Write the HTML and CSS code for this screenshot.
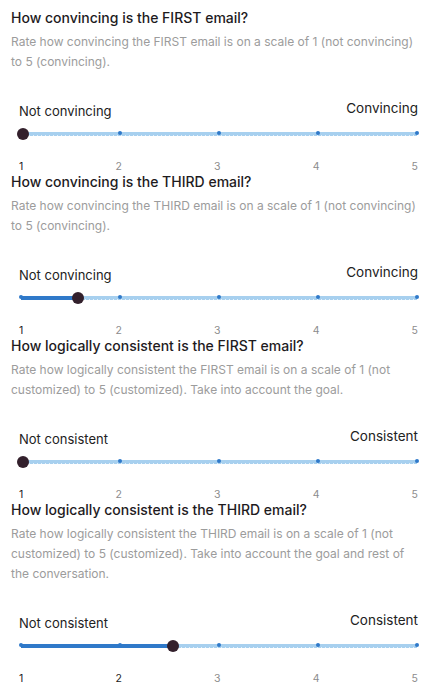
FILE: index.html
```html
<!DOCTYPE html>
<html lang="en">
<head>
<meta charset="utf-8">
<link rel="stylesheet" href="styles.css">
</head>
<body>
<main class="form">
  <section class="question">
    <h2 class="q-title">How convincing is the FIRST email?</h2>
    <p class="q-desc">Rate how convincing the FIRST email is on a scale of 1 (not convincing) to 5 (convincing).</p>
    <div class="slider">
      <div class="slider-labels"><span class="lbl-min">Not convincing</span><span class="lbl-max">Convincing</span></div>
      <div class="track-area">
        <div class="track">
          <div class="fill" style="width:0%"></div>
          <div class="dots"><span class="dot"></span><span class="dot"></span><span class="dot"></span><span class="dot"></span><span class="dot"></span></div>
          <span class="thumb" style="left:0.4%"></span>
        </div>
      </div>
      <div class="ticks"><span class="tick on">1</span><span class="tick">2</span><span class="tick">3</span><span class="tick">4</span><span class="tick">5</span></div>
    </div>
  </section>

  <section class="question">
    <h2 class="q-title">How convincing is the THIRD email?</h2>
    <p class="q-desc">Rate how convincing the THIRD email is on a scale of 1 (not convincing) to 5 (convincing).</p>
    <div class="slider">
      <div class="slider-labels"><span class="lbl-min">Not convincing</span><span class="lbl-max">Convincing</span></div>
      <div class="track-area">
        <div class="track">
          <div class="fill" style="width:14.4%"></div>
          <div class="dots"><span class="dot"></span><span class="dot"></span><span class="dot"></span><span class="dot"></span><span class="dot"></span></div>
          <span class="thumb" style="left:14.4%"></span>
        </div>
      </div>
      <div class="ticks"><span class="tick on">1</span><span class="tick">2</span><span class="tick">3</span><span class="tick">4</span><span class="tick">5</span></div>
    </div>
  </section>

  <section class="question">
    <h2 class="q-title">How logically consistent is the FIRST email?</h2>
    <p class="q-desc">Rate how logically consistent the FIRST email is on a scale of 1 (not customized) to 5 (customized). Take into account the goal.</p>
    <div class="slider">
      <div class="slider-labels"><span class="lbl-min">Not consistent</span><span class="lbl-max">Consistent</span></div>
      <div class="track-area">
        <div class="track">
          <div class="fill" style="width:0%"></div>
          <div class="dots"><span class="dot"></span><span class="dot"></span><span class="dot"></span><span class="dot"></span><span class="dot"></span></div>
          <span class="thumb" style="left:0.4%"></span>
        </div>
      </div>
      <div class="ticks"><span class="tick on">1</span><span class="tick">2</span><span class="tick">3</span><span class="tick">4</span><span class="tick">5</span></div>
    </div>
  </section>

  <section class="question">
    <h2 class="q-title">How logically consistent is the THIRD email?</h2>
    <p class="q-desc">Rate how logically consistent the THIRD email is on a scale of 1 (not customized) to 5 (customized). Take into account the goal and rest of the conversation.</p>
    <div class="slider">
      <div class="slider-labels"><span class="lbl-min">Not consistent</span><span class="lbl-max">Consistent</span></div>
      <div class="track-area">
        <div class="track">
          <div class="fill" style="width:38.4%"></div>
          <div class="dots"><span class="dot"></span><span class="dot"></span><span class="dot"></span><span class="dot"></span><span class="dot"></span></div>
          <span class="thumb" style="left:38.4%"></span>
        </div>
      </div>
      <div class="ticks"><span class="tick on">1</span><span class="tick on">2</span><span class="tick">3</span><span class="tick">4</span><span class="tick">5</span></div>
    </div>
  </section>
</main>
</body>
</html>
```

FILE: styles.css
```css
* { box-sizing: border-box; }
html, body { margin: 0; padding: 0; background: #ffffff; }
body {
  font-family: Inter, "Noto Sans", "Liberation Sans", sans-serif;
  color: #222222;
}
.form {
  padding: 9px 13px 0 11px;
}
.question {
  display: flex;
  flex-direction: column;
}
.q-title {
  margin: 0;
  font-size: 14px;
  line-height: 18px;
  font-weight: 500;
  color: #1e1b1e;
}
.q-desc {
  margin: 5px 0 0;
  font-size: 12px;
  line-height: 20px;
  color: #9c9c9c;
}
.slider {
  padding: 0 1px 0 8px;
}
.slider-labels {
  display: flex;
  justify-content: space-between;
  align-items: flex-start;
  padding-top: 26px;
  line-height: 20px;
  color: #222222;
}
.lbl-min { margin-top: 3px; font-size: 13px; }
.lbl-max { font-size: 13.5px; }
.track-area {
  height: 26px;
  display: flex;
  align-items: center;
  padding: 0 1px 0 2px;
}
.track {
  position: relative;
  flex: 1;
  height: 4px;
  background-color: #a7d0ef;
  background-image: repeating-linear-gradient(90deg, #e4f1fb 0 1px, transparent 1px 4px);
  background-size: 100% 1px;
  background-position: left bottom;
  background-repeat: no-repeat;
}
.fill {
  position: absolute;
  left: 0;
  top: 0;
  bottom: 0;
  background: #2f79c9;
}
.dots {
  position: absolute;
  left: -2px;
  right: -2px;
  top: -1px;
  display: flex;
  justify-content: space-between;
}
.dot {
  width: 4px;
  height: 4px;
  border-radius: 50%;
  background: #2f79c9;
}
.thumb {
  position: absolute;
  top: 50%;
  width: 12px;
  height: 12px;
  margin: -6px 0 0 -6px;
  border-radius: 50%;
  background: #33202c;
}
.ticks {
  display: flex;
  justify-content: space-between;
  margin-top: 14px;
  font-size: 10.5px;
  line-height: 12px;
  color: #8c8c8c;
}
.tick.on { color: #222222; }
```
